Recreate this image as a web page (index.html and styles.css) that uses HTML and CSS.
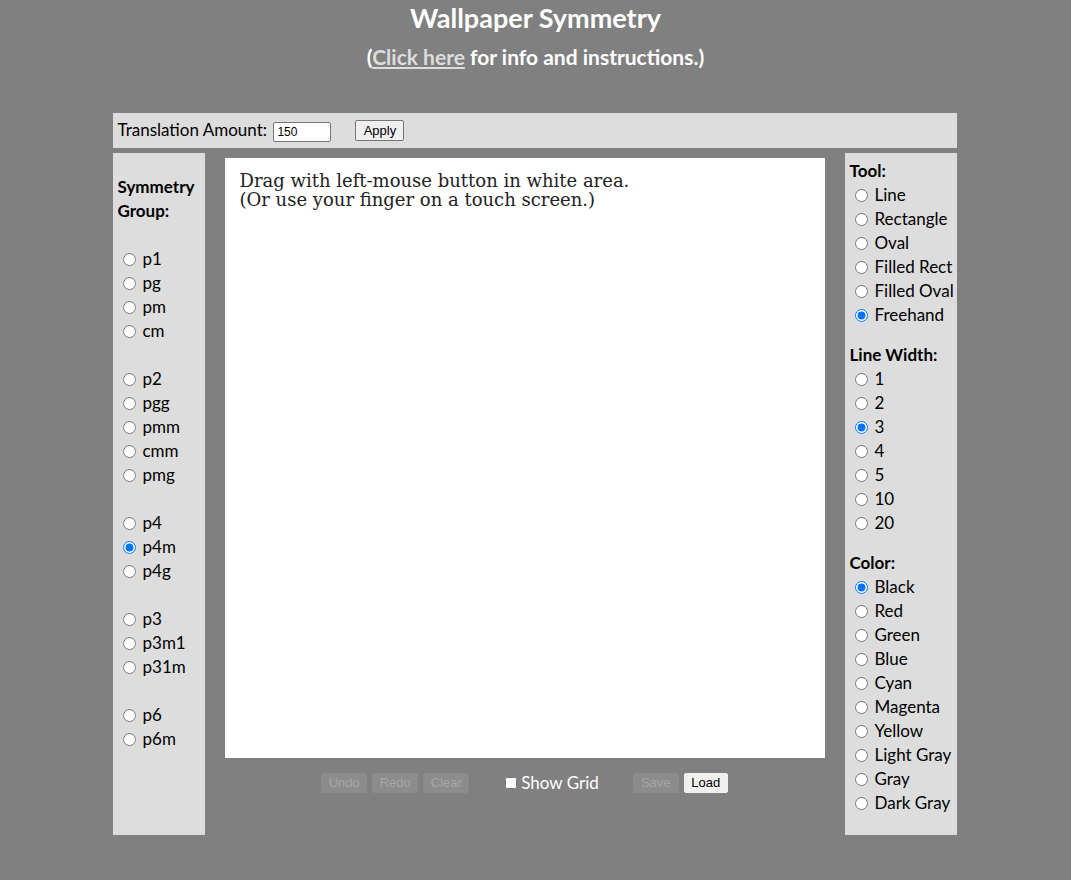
FILE: index.html
```html
<!DOCTYPE html>
<html lang="en">
<head>
    <meta charset="UTF-8">
    <title>Wallpaper Symmetry</title>
    <link rel="stylesheet" href="styles.css">
</head>
<body>
    <h1>Wallpaper Symmetry</h1>
    <h2>(<a href="#">Click here</a> for info and instructions.)</h2>

    <div class="app">
        <div class="topbar">
            <label>Translation Amount: <input type="text" class="amount" value="150"></label>
            <button class="apply">Apply</button>
        </div>

        <div class="main">
            <!-- symmetry groups -->
            <div class="panel left">
                <div class="head">Symmetry<br>Group:</div>
                <div class="gap"></div>
                <label><input type="radio" name="grp">p1</label>
                <label><input type="radio" name="grp">pg</label>
                <label><input type="radio" name="grp">pm</label>
                <label><input type="radio" name="grp">cm</label>
                <div class="gap"></div>
                <label><input type="radio" name="grp">p2</label>
                <label><input type="radio" name="grp">pgg</label>
                <label><input type="radio" name="grp">pmm</label>
                <label><input type="radio" name="grp">cmm</label>
                <label><input type="radio" name="grp">pmg</label>
                <div class="gap"></div>
                <label><input type="radio" name="grp">p4</label>
                <label><input type="radio" name="grp" checked>p4m</label>
                <label><input type="radio" name="grp">p4g</label>
                <div class="gap"></div>
                <label><input type="radio" name="grp">p3</label>
                <label><input type="radio" name="grp">p3m1</label>
                <label><input type="radio" name="grp">p31m</label>
                <div class="gap"></div>
                <label><input type="radio" name="grp">p6</label>
                <label><input type="radio" name="grp">p6m</label>
            </div>

            <div class="center">
                <div class="canvas">
                    <p>Drag with left-mouse button in white area.<br>(Or use your finger on a touch screen.)</p>
                </div>
                <div class="controls">
                    <button disabled>Undo</button>
                    <button disabled>Redo</button>
                    <button disabled>Clear</button>
                    <label class="grid"><input type="checkbox">Show Grid</label>
                    <button disabled>Save</button>
                    <button class="load">Load</button>
                </div>
            </div>

            <!-- tool options -->
            <div class="panel right">
                <div class="head">Tool:</div>
                <label><input type="radio" name="tool">Line</label>
                <label><input type="radio" name="tool">Rectangle</label>
                <label><input type="radio" name="tool">Oval</label>
                <label><input type="radio" name="tool">Filled Rect</label>
                <label><input type="radio" name="tool">Filled Oval</label>
                <label><input type="radio" name="tool" checked>Freehand</label>

                <div class="head spaced">Line Width:</div>
                <label><input type="radio" name="lw">1</label>
                <label><input type="radio" name="lw">2</label>
                <label><input type="radio" name="lw" checked>3</label>
                <label><input type="radio" name="lw">4</label>
                <label><input type="radio" name="lw">5</label>
                <label><input type="radio" name="lw">10</label>
                <label><input type="radio" name="lw">20</label>

                <div class="head spaced">Color:</div>
                <label><input type="radio" name="col" checked>Black</label>
                <label><input type="radio" name="col">Red</label>
                <label><input type="radio" name="col">Green</label>
                <label><input type="radio" name="col">Blue</label>
                <label><input type="radio" name="col">Cyan</label>
                <label><input type="radio" name="col">Magenta</label>
                <label><input type="radio" name="col">Yellow</label>
                <label><input type="radio" name="col">Light Gray</label>
                <label><input type="radio" name="col">Gray</label>
                <label><input type="radio" name="col">Dark Gray</label>
            </div>
        </div>
    </div>
</body>
</html>
```

FILE: styles.css
```css
body {
    background: #808080;
    margin: 8px;
    font-family: 'Lato', sans-serif;
    color: #000;
}
h1 {
    color: #fff;
    text-align: center;
    font-size: 27px;
    margin: -1px 0 0;
    line-height: 22px;
}
h2 {
    color: #fff;
    text-align: center;
    font-size: 21px;
    margin: 15px 0 0;
    line-height: 26px;
}
h2 a {
    color: #ddd;
}
.app {
    width: 844px;
    margin: 43px auto 0;
    position: relative;
    left: -1px;
}
.topbar {
    background: #ddd;
    height: 35px;
    display: flex;
    align-items: center;
    padding-left: 5px;
    font-size: 17px;
}
.amount {
    width: 50px;
    height: 16px;
    font-size: 12px;
    font-family: 'Liberation Sans', sans-serif;
    padding: 1px 3px;
    border: 1px solid #767676;
    border-radius: 2px;
    margin-left: 2px;
}
.apply {
    margin-left: 24px;
    font-family: 'Liberation Sans', sans-serif;
    font-size: 13px;
    height: 21px;
    width: 49px;
    padding: 1px 6px;
    background: #efefef;
    border: 1px solid #767676;
    border-radius: 2px;
}
.main {
    display: flex;
    gap: 20px;
    margin-top: 5px;
}
.panel {
    background: #ddd;
    height: 682px;
    box-sizing: border-box;
    font-size: 17px;
    line-height: 24px;
}
.panel label {
    display: flex;
    align-items: center;
    height: 24px;
    white-space: nowrap;
}
.panel input {
    margin: 0 7px 0 5px;
    width: 13px;
    height: 13px;
}
.left {
    width: 92px;
    padding: 22px 0 0 5px;
}
.right {
    width: 112px;
    padding: 6px 0 0 5px;
}
.head {
    font-weight: bold;
}
.spaced {
    margin-top: 16px;
}
.gap {
    height: 24px;
}
.center {
    width: 600px;
}
.canvas {
    background: #fff;
    height: 600px;
    margin-top: 5px;
    overflow: hidden;
}
.canvas p {
    margin: 0;
    padding: 13px 0 0 15px;
    font-family: 'DejaVu Serif', serif;
    font-size: 18px;
    line-height: 19px;
    color: #222;
}
.controls {
    display: flex;
    align-items: center;
    justify-content: center;
    margin-top: 14px;
    gap: 5px;
}
.controls button {
    font-family: 'Liberation Sans', sans-serif;
    font-size: 13px;
    height: 20px;
    width: 46px;
    padding: 0;
    border: 1px solid #8a8a8a;
    border-radius: 2px;
    background: #8c8c8c;
    color: #a6a6a6;
}
.controls .load {
    width: 44px;
    background: #f0f0f0;
    color: #000;
    border-color: #f0f0f0;
}
.grid {
    display: flex;
    align-items: center;
    color: #fff;
    font-size: 17px;
    margin: 0 29px 0 31px;
}
.grid input {
    margin: 0 4px 0 0;
    width: 12px;
    height: 12px;
}
```
